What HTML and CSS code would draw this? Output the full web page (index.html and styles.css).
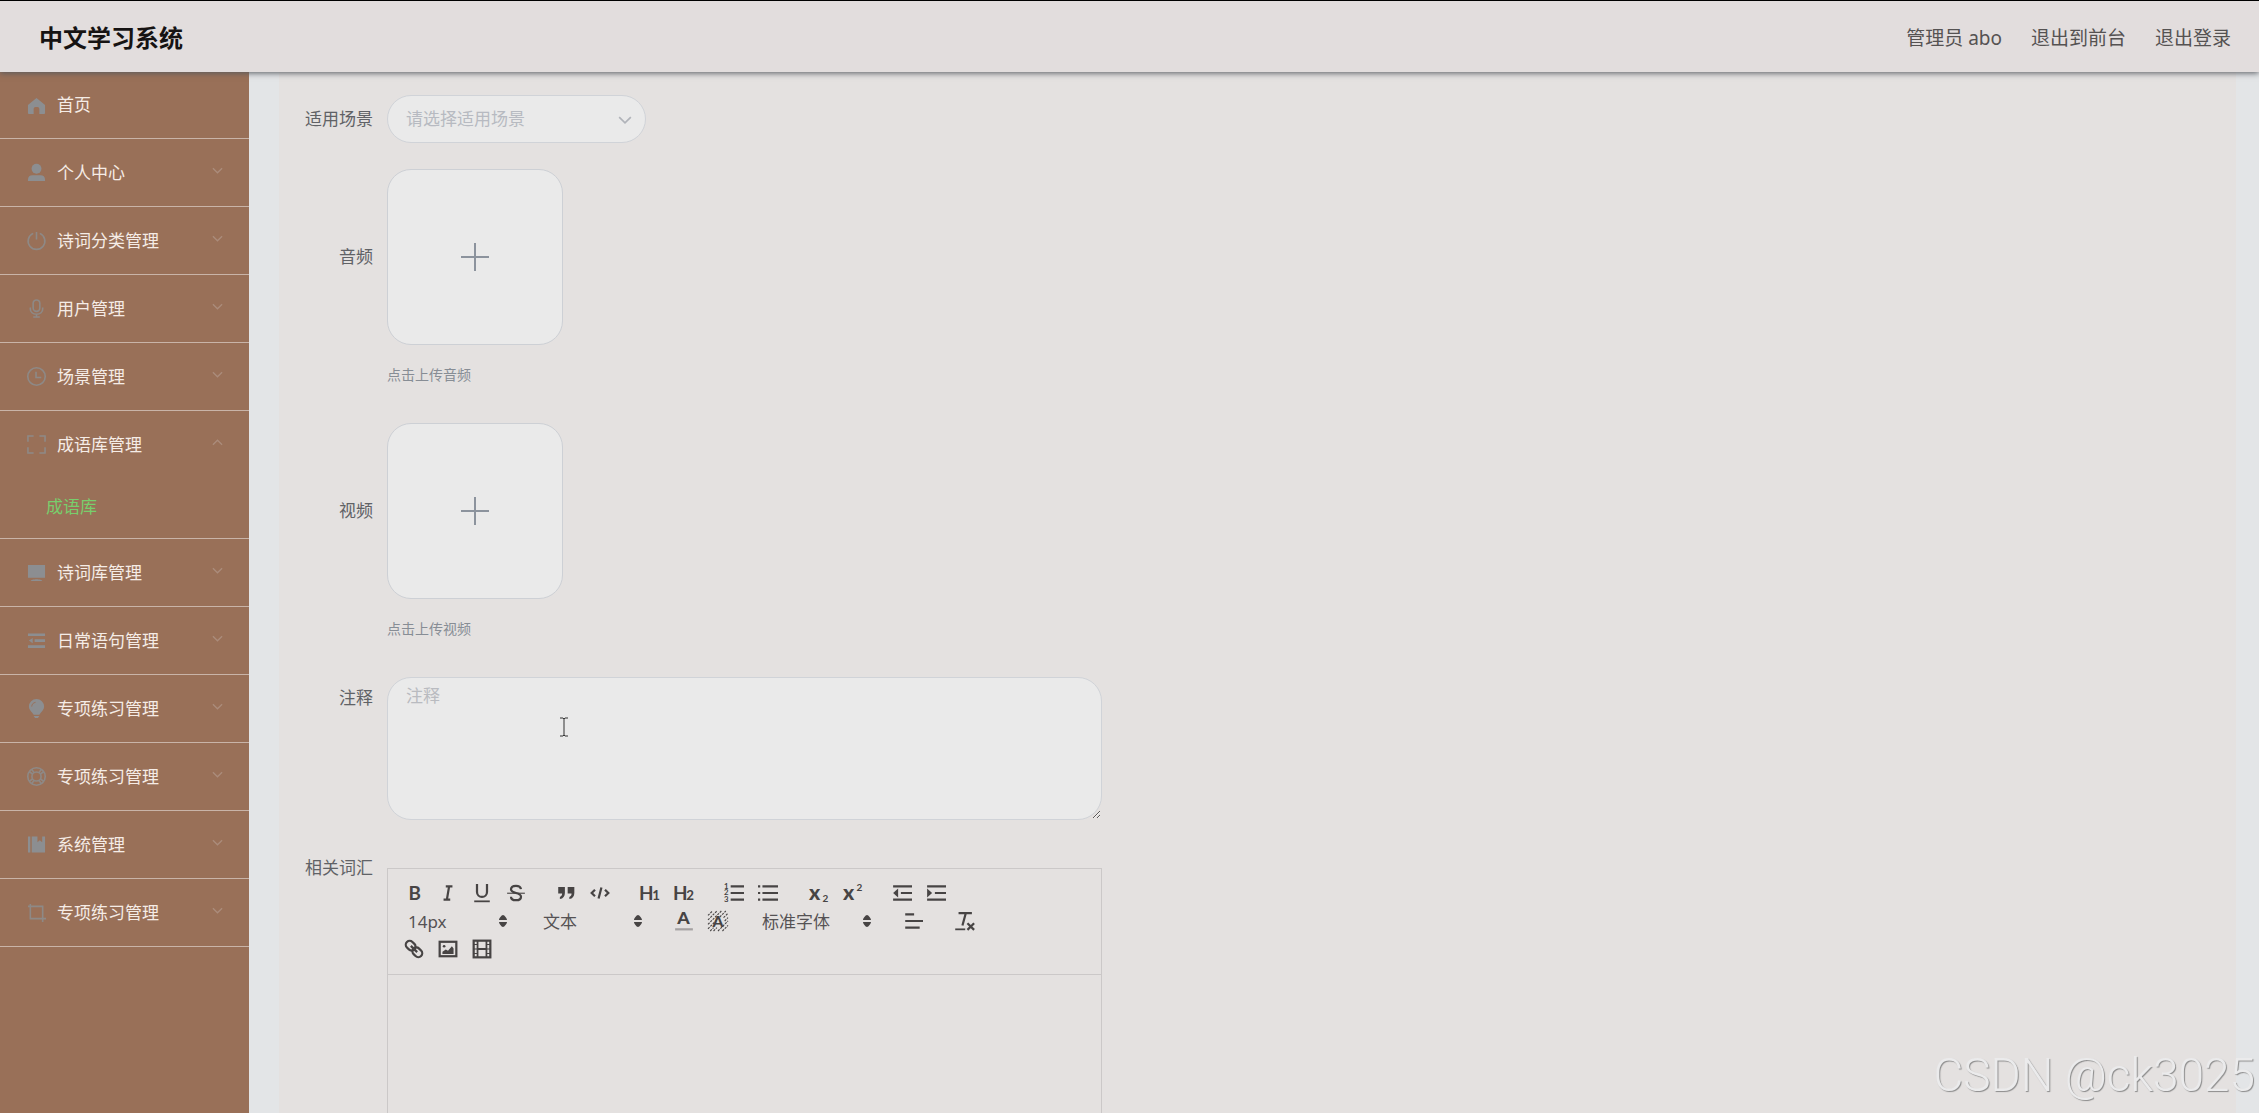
FILE: index.html
```html
<!DOCTYPE html>
<html lang="zh-CN">
<head>
<meta charset="utf-8">
<meta name="viewport" content="width=device-width, initial-scale=1">
<title>中文学习系统</title>
<link rel="stylesheet" href="styles.css">
</head>
<body>
<svg class="sprite" aria-hidden="true">
  <symbol id="chevron" viewBox="0 0 12 12"><path d="M1 3.500l5 5 5-5" fill="none" stroke="currentColor" stroke-width="1.400"/></symbol>
  <symbol id="updown" viewBox="0 0 8 12"><path d="M4 0C5.500 0 8 3.500 8 5H0C0 3.500 2.500 0 4 0zM0 7h8c0 1.500-2.500 5-4 5S0 8.500 0 7z" fill="currentColor"/></symbol>
</svg>

<header class="topbar">
  <h1 class="brand">中文学习系统</h1>
  <nav class="topbar-links">
    <span>管理员 abo</span>
    <a href="#front">退出到前台</a>
    <a href="#logout">退出登录</a>
  </nav>
</header>

<div class="layout">
  <nav class="sidebar" aria-label="主菜单">
    <ul class="menu">
      <li><a class="menu-row" href="#home">
        <svg class="menu-icon" viewBox="0 0 20 20"><path d="M10 2l9 7.500V18a1 1 0 0 1-1 1h-5v-5.500a2 2 0 0 0-2-2h-2a2 2 0 0 0-2 2V19H2a1 1 0 0 1-1-1V9.500z" fill="currentColor"/></svg>
        <span>首页</span></a></li>
      <li><button class="menu-row" type="button">
        <svg class="menu-icon" viewBox="0 0 20 20"><circle cx="10" cy="6" r="5.200" fill="currentColor"/><path d="M1 19v-1.500c0-3 2-4.500 4.500-4.500h9c2.500 0 4.500 1.500 4.500 4.500V19z" fill="currentColor"/></svg>
        <span>个人中心</span><svg class="menu-arrow"><use href="#chevron"/></svg></button></li>
      <li><button class="menu-row" type="button">
        <svg class="menu-icon line" viewBox="0 0 20 20"><path d="M10 1v8M6.500 2.500a8.800 8.800 0 1 0 7 0"/></svg>
        <span>诗词分类管理</span><svg class="menu-arrow"><use href="#chevron"/></svg></button></li>
      <li><button class="menu-row" type="button">
        <svg class="menu-icon line" viewBox="0 0 20 20"><rect x="6.500" y="1" width="7" height="12" rx="3.500"/><path d="M3.500 9v1.500c0 3 2.500 5.500 6.500 5.500s6.500-2.500 6.500-5.500V9M10 16v3M6.500 19h7"/></svg>
        <span>用户管理</span><svg class="menu-arrow"><use href="#chevron"/></svg></button></li>
      <li><button class="menu-row" type="button">
        <svg class="menu-icon line" viewBox="0 0 20 20"><circle cx="10" cy="10" r="9.200"/><path d="M9.500 5v6H15"/></svg>
        <span>场景管理</span><svg class="menu-arrow"><use href="#chevron"/></svg></button></li>
      <li><button class="menu-row" type="button" aria-expanded="true">
        <svg class="menu-icon line" viewBox="0 0 20 20"><path d="M1 7V1h6M13 1h6v6M19 13v6h-6M7 19H1v-6"/></svg>
        <span>成语库管理</span><svg class="menu-arrow up"><use href="#chevron"/></svg></button>
        <ul class="submenu"><li><a href="#idioms" aria-current="page">成语库</a></li></ul></li>
      <li><button class="menu-row" type="button">
        <svg class="menu-icon" viewBox="0 0 20 20"><path d="M1 2h18v13.500H1zM4 19c0-1 3-1.800 6-1.800s6 .8 6 1.800z" fill="currentColor"/></svg>
        <span>诗词库管理</span><svg class="menu-arrow"><use href="#chevron"/></svg></button></li>
      <li><button class="menu-row" type="button">
        <svg class="menu-icon" viewBox="0 0 20 20"><path d="M1 2.500h18v2.800H1zM8 8.700h11v2.800H8zM1 15h18v2.800H1zM2 10.100l4-2.800v5.600z" fill="currentColor"/></svg>
        <span>日常语句管理</span><svg class="menu-arrow"><use href="#chevron"/></svg></button></li>
      <li><button class="menu-row" type="button">
        <svg class="menu-icon" viewBox="0 0 20 20"><path d="M10 0a8 8 0 0 1 8 8c0 3-2 5-3.500 6.500L13 16.500H7L5.500 14.500C4 13 2 11 2 8a8 8 0 0 1 8-8zM7 18h6l-1.500 2h-3z" fill="currentColor"/><path d="M5 8c0-2.500 1.500-4 4-4.500" class="bulb-shine"/></svg>
        <span>专项练习管理</span><svg class="menu-arrow"><use href="#chevron"/></svg></button></li>
      <li><button class="menu-row" type="button">
        <svg class="menu-icon line" viewBox="0 0 20 20"><circle cx="10" cy="10" r="9.200"/><circle cx="10" cy="10" r="4.800"/><path d="M5 2.500l2.500 3.500M15 2.500L12.500 6M5 17.500L7.500 14M15 17.500L12.500 14M2.500 5L6 7.500M17.500 5L14 7.500M2.500 15L6 12.500M17.500 15L14 12.500"/></svg>
        <span>专项练习管理</span><svg class="menu-arrow"><use href="#chevron"/></svg></button></li>
      <li><button class="menu-row" type="button">
        <svg class="menu-icon" viewBox="0 0 20 20"><path d="M1 1.500h2.500v17H1zM5 1.500h6v6l2.500-2 2.500 2v-6h3v17H5z" fill="currentColor"/></svg>
        <span>系统管理</span><svg class="menu-arrow"><use href="#chevron"/></svg></button></li>
      <li><button class="menu-row" type="button">
        <svg class="menu-icon line" viewBox="0 0 20 20"><path d="M1 3.500h15.500V20M3.500 1v15.500H20"/></svg>
        <span>专项练习管理</span><svg class="menu-arrow"><use href="#chevron"/></svg></button></li>
    </ul>
  </nav>

  <main class="content">
    <form class="panel">
      <div class="field field-select">
        <label for="scene">适用场景</label>
        <div class="select-box">
          <select id="scene"><option>请选择适用场景</option></select>
          <svg><use href="#chevron"/></svg>
        </div>
      </div>
      <div class="field field-upload">
        <label for="audio">音频</label>
        <div>
          <button class="upload" id="audio" type="button" aria-label="上传音频"><svg viewBox="0 0 28 28"><path d="M14 0v28M0 14h28"/></svg></button>
          <p class="hint">点击上传音频</p>
        </div>
      </div>
      <div class="field field-upload">
        <label for="video">视频</label>
        <div>
          <button class="upload" id="video" type="button" aria-label="上传视频"><svg viewBox="0 0 28 28"><path d="M14 0v28M0 14h28"/></svg></button>
          <p class="hint">点击上传视频</p>
        </div>
      </div>
      <div class="field">
        <label for="notes">注释</label>
        <div class="notes-box">
          <textarea id="notes" placeholder="注释"></textarea>
          <svg class="ibeam" viewBox="0 0 10 20" aria-hidden="true"><path d="M1 1h3l1 1 1-1h3M1 19h3l1-1 1 1h3M5 2v16"/></svg>
        </div>
      </div>
      <div class="field">
        <label for="editor">相关词汇</label>
        <div class="editor">
          <div class="toolbar" role="toolbar">
            <div class="group">
              <button type="button" aria-label="粗体"><svg viewBox="0 0 18 18"><text x="4" y="15" font-size="17">B</text></svg></button>
              <button type="button" aria-label="斜体"><svg viewBox="0 0 18 18"><path d="M7 3h6M5 15h6M8 15l2-12"/></svg></button>
              <button type="button" aria-label="下划线"><svg viewBox="0 0 18 18"><path d="M4.500 1v7a4.500 4.500 0 0 0 9 0V1"/><path d="M2 16.500h14" class="mid"/></svg></button>
              <button type="button" aria-label="删除线"><svg viewBox="0 0 18 18"><path d="M13.500 5.500C13 3.200 11 2.500 9 2.500 6.500 2.500 4.500 3.700 4.500 5.700c0 4.300 9 2.300 9 6.600 0 2-2 3.200-4.500 3.200s-4.500-1.200-4.500-3.200"/><path d="M1 9.200h16" class="thin"/></svg></button>
            </div>
            <div class="group">
              <button type="button" aria-label="引用"><svg viewBox="0 0 18 18"><path class="solid" d="M2 3.500h6V9c0 3-1.500 5-4.500 5.500v-2C5 12 5.500 11 5.500 9.500H2zM10.500 3.500h6V9c0 3-1.500 5-4.500 5.500v-2c1.500-.5 2-1.500 2-3h-3.500z"/></svg></button>
              <button type="button" aria-label="代码"><svg viewBox="0 0 18 18"><path d="M4.500 6L1.500 9l3 3M13.500 6l3 3-3 3M10.300 4l-2.600 10"/></svg></button>
            </div>
            <div class="group">
              <button type="button" aria-label="一级标题"><svg viewBox="0 0 18 18"><text x="-1" y="15" font-size="17">H</text><text x="11" y="15" font-size="12">1</text></svg></button>
              <button type="button" aria-label="二级标题"><svg viewBox="0 0 18 18"><text x="-1" y="15" font-size="17">H</text><text x="11" y="15" font-size="12">2</text></svg></button>
            </div>
            <div class="group">
              <button type="button" aria-label="有序列表"><svg viewBox="0 0 18 18"><path d="M6 3h12M6 9h12M6 15h12"/><text x="0" y="5" font-size="7">1</text><text x="0" y="11" font-size="7">2</text><text x="0" y="17" font-size="7">3</text></svg></button>
              <button type="button" aria-label="无序列表"><svg viewBox="0 0 18 18"><path d="M4 3h14M4 9h14M4 15h14M0 3h2M0 9h2M0 15h2"/></svg></button>
            </div>
            <div class="group">
              <button type="button" aria-label="下标"><svg viewBox="0 0 18 18"><text class="heavy" x="1" y="15" font-size="19">x</text><text x="13" y="17" font-size="9">2</text></svg></button>
              <button type="button" aria-label="上标"><svg viewBox="0 0 18 18"><text class="heavy" x="1" y="15" font-size="19">x</text><text x="13" y="7" font-size="9">2</text></svg></button>
            </div>
            <div class="group">
              <button type="button" aria-label="减少缩进"><svg viewBox="0 0 18 18"><path d="M1 3h17M8 9h10M1 15h17"/><path class="solid" d="M5.500 5v8L1 9z"/></svg></button>
              <button type="button" aria-label="增加缩进"><svg viewBox="0 0 18 18"><path d="M1 3h17M8 9h10M1 15h17"/><path class="solid" d="M1 5v8l4.500-4z"/></svg></button>
            </div>
            <div class="group picker">
              <select aria-label="字号"><option>14px</option></select><svg><use href="#updown"/></svg>
            </div>
            <div class="group picker">
              <select aria-label="段落"><option>文本</option></select><svg><use href="#updown"/></svg>
            </div>
            <div class="group">
              <button type="button" aria-label="文字颜色"><svg viewBox="0 0 18 18"><text class="heavy" x="3" y="12" font-size="16">A</text><path class="bar" d="M1 16.500h16"/></svg></button>
              <button type="button" aria-label="背景颜色"><svg viewBox="0 0 18 18"><path class="hatch" d="M0 4l4-4M0 8l8-8M0 12L12 0M0 16L16 0M2 18l3-3M5 18l3-3M9 18l9-9M13 18l5-5M14 6l4-4M15 9l3-3"/><text class="heavy" x="4" y="14" font-size="14">A</text></svg></button>
            </div>
            <div class="group picker wide">
              <select aria-label="字体"><option>标准字体</option></select><svg><use href="#updown"/></svg>
            </div>
            <div class="group">
              <button type="button" aria-label="对齐"><svg viewBox="0 0 18 18"><path d="M2 3h8M2 9h16M2 15h13"/></svg></button>
            </div>
            <div class="group">
              <button type="button" aria-label="清除格式"><svg viewBox="0 0 18 18"><path d="M5 2h12M11.500 2L8.500 13M13 11l6 6M19 11l-6 6"/><path class="mid" d="M2 16.500h9"/></svg></button>
            </div>
            <div class="group">
              <button type="button" aria-label="链接"><svg viewBox="0 0 18 18"><g transform="rotate(45 9 9)"><rect x="0" y="5.500" width="9.500" height="7" rx="3.500"/><rect x="8.500" y="5.500" width="9.500" height="7" rx="3.500"/><path d="M5 9h8"/></g></svg></button>
              <button type="button" aria-label="图片"><svg viewBox="0 0 18 18"><rect x="1.500" y="2.500" width="15" height="13"/><path class="solid" d="M4 13.500v-2l3-2 2 1 3.500-4L14 8.500v5z"/><circle class="solid" cx="5.500" cy="6.500" r="1.200"/></svg></button>
              <button type="button" aria-label="视频"><svg viewBox="0 0 18 18"><rect x="1.500" y="1.500" width="15" height="15"/><path class="mid" d="M5 1v16M13 1v16M5 9h8"/><path class="thin" d="M1 5h4M1 9h4M1 13h4M13 5h4M13 9h4M13 13h4"/></svg></button>
            </div>
          </div>
          <div class="editor-body" id="editor" contenteditable="true" role="textbox" aria-label="相关词汇"></div>
        </div>
      </div>
    </form>
  </main>
</div>
<div class="watermark">CSDN @ck3025</div>
</body>
</html>
```

FILE: styles.css
```css
* { box-sizing: border-box; }

body {
  display: flex;
  flex-direction: column;
  height: 100vh;
  margin: 0;
  overflow: hidden;
  background: #e3e5e7;
  color: #606266;
  font: 17px/24px "Noto Sans", "Noto Sans CJK SC", sans-serif;
}

button, select, textarea { font: inherit; color: inherit; }
button { padding: 0; border: 0; background: none; cursor: pointer; }
a { color: inherit; text-decoration: none; }
ul { margin: 0; padding: 0; list-style: none; }
.sprite { display: none; }

/* top bar */
.topbar {
  position: relative;
  z-index: 1;
  flex: none;
  display: flex;
  align-items: center;
  justify-content: space-between;
  height: 72px;
  padding: 2px 28px 0 39px;
  border-top: 1px solid #000;
  background: #e2dddd;
  box-shadow: 0 1px 6px #55595f;
}
.brand { margin: 0; color: #161313; font-size: 24px; line-height: 32px; }
.topbar-links { display: flex; gap: 29px; color: #555252; font-size: 19px; }

.layout { flex: 1; display: flex; min-height: 0; }

/* side menu */
.sidebar { flex: none; width: 249px; background: #997058; overflow: hidden; }
.menu > li { border-bottom: 1px solid #c9b4a8; }
.menu-row {
  display: flex;
  align-items: center;
  gap: 11px;
  width: 100%;
  height: 67px;
  padding: 0 26px 0 27px;
  color: #f5ece6;
  text-align: left;
}
.menu > li:first-child .menu-row { height: 66px; }
.menu-icon { flex: none; width: 19px; height: 19px; color: #8c8e91; }
.line { fill: none; stroke: #8e8986; stroke-width: 1.7; overflow: visible; }
.bulb-shine { fill: none; stroke: #997058; stroke-width: 1; }
.menu-arrow { width: 11px; height: 11px; margin: 0 0 4px auto; color: #ab8c7b; }
.up { transform: rotate(180deg); }
.submenu a {
  display: block;
  height: 60px;
  padding-left: 46px;
  color: #78ce6c;
  line-height: 58px;
}

/* form */
.content {
  flex: 1;
  min-width: 0;
  padding: 0 23px 0 30px;
  overflow-y: auto;
  scrollbar-width: none;
}
.panel { min-height: 100%; padding: 23px 20px 24px 14px; background: #e4e1e0; }
.field { display: flex; margin-bottom: 24px; }
.field > label { flex: none; width: 94px; padding-right: 14px; line-height: 42px; text-align: right; }
.field-select { align-items: center; margin-bottom: 26px; }
.field-upload > label { line-height: 176px; }

.select-box { position: relative; width: 259px; }
.select-box select {
  appearance: none;
  display: block;
  width: 100%;
  height: 48px;
  padding: 0 40px 0 18px;
  border: 1px solid #d0d3d8;
  border-radius: 24px;
  background: #eaeaea;
  color: #b7bac1;
}
.select-box svg { position: absolute; top: 18px; right: 14px; width: 14px; height: 14px; color: #b0b3b9; }

.upload {
  display: flex;
  align-items: center;
  justify-content: center;
  width: 176px;
  height: 176px;
  border: 1px solid #cdd0d5;
  border-radius: 24px;
  background: #eaeaea;
}
.upload svg { width: 28px; height: 28px; stroke: #8c939d; stroke-width: 2; }
.hint { margin: 6px 0 0; color: #878d95; font-size: 14px; line-height: 48px; }

.notes-box { position: relative; width: 715px; }
.notes-box textarea {
  display: block;
  width: 100%;
  height: 143px;
  padding: 6px 18px;
  border: 1px solid #d0d3d8;
  border-radius: 24px;
  background: #eaeaea;
  resize: vertical;
}
.notes-box textarea::placeholder { color: #b9bbc0; opacity: 1; }
.ibeam { position: absolute; top: 40px; left: 172px; width: 10px; height: 20px; fill: none; stroke: #333; stroke-width: 1; }

/* rich text editor */
.editor { width: 715px; margin-top: 24px; border: 1px solid #cbc8c8; }
.field:last-child > label { line-height: 48px; }
.toolbar {
  display: flex;
  flex-wrap: wrap;
  padding: 10px 9px;
  border-bottom: 1px solid #cbc8c8;
  color: #474444;
}
.toolbar::after { content: ""; width: 100%; height: 1px; }
.group { display: flex; height: 28px; margin-right: 16px; }
.group button { display: flex; align-items: center; justify-content: center; width: 34px; height: 28px; }
.group button svg { width: 20px; height: 20px; fill: none; stroke: currentColor; stroke-width: 2; overflow: visible; }
.group text { fill: currentColor; stroke: none; font-family: Lato, sans-serif; font-weight: 700; }
.group .heavy { font-weight: 900; }
.group .mid { stroke-width: 1.6; }
.group .thin { stroke-width: 1; }
.group .hatch { stroke-width: 1; stroke-dasharray: 2 1; }
.group .bar { stroke: #a5a2a2; }
.group .solid { fill: currentColor; stroke: none; }
.picker { position: relative; width: 119px; }
.picker.wide { width: 129px; }
.picker select {
  appearance: none;
  width: 100%;
  padding: 2px 24px 0 11px;
  border: 0;
  background: none;
  color: #555254;
}
.picker svg { position: absolute; top: 8px; right: 9px; width: 8px; height: 12px; }
.editor-body { min-height: 240px; outline: none; }

.watermark {
  position: fixed;
  right: 4px;
  bottom: 13px;
  color: #ebebec;
  font: 300 46px/50px Roboto, sans-serif;
  text-shadow: 1px 1px 1px #8c8c8c;
  pointer-events: none;
}
```
